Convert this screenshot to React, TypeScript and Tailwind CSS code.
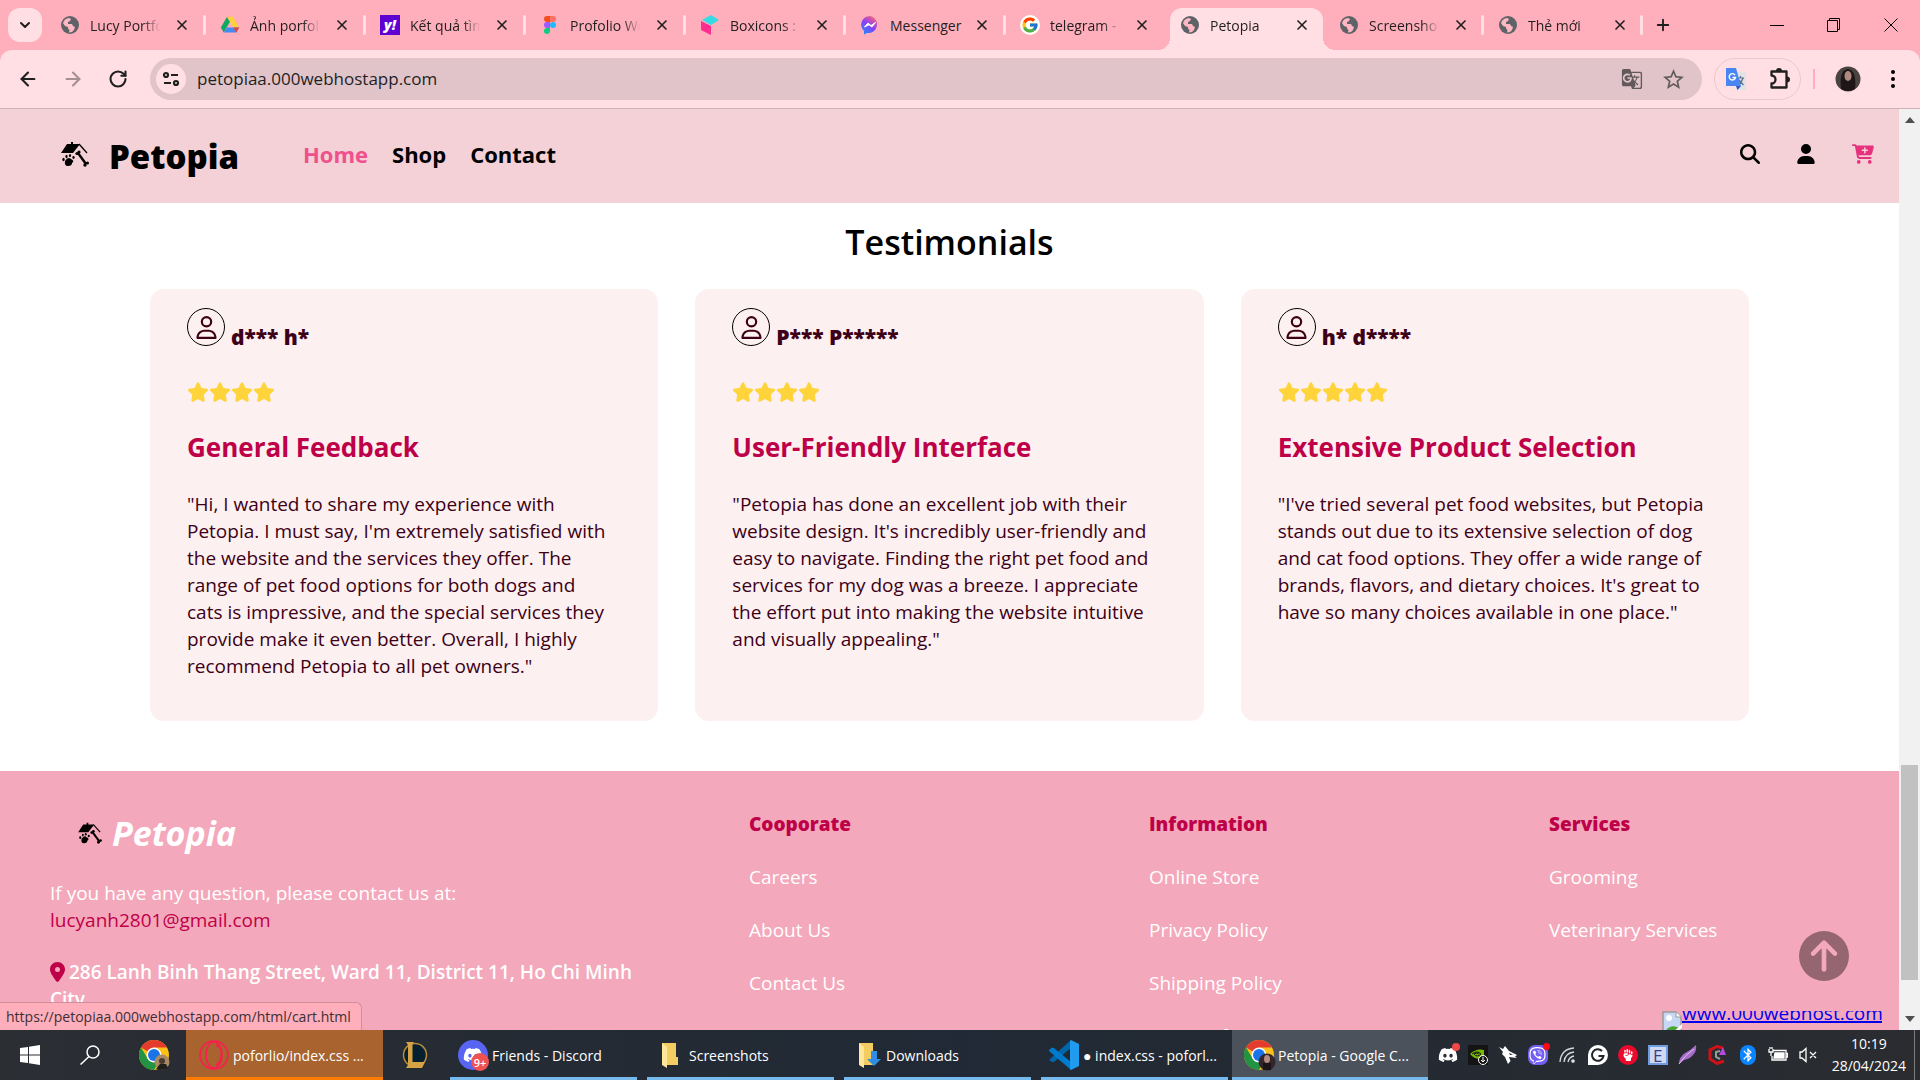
import React from "react";
import {
  FaMagnifyingGlass,
  FaUser,
  FaCartPlus,
  FaRegUser,
  FaStar,
  FaLocationDot,
  FaCircleArrowUp,
  FaDiscord,
  FaViber,
  FaHandFist,
} from "react-icons/fa6";
import { FcGoogle } from "react-icons/fc";
import { MdStarBorder, MdGTranslate, MdBluetooth } from "react-icons/md";
import { ArrowLeft, ArrowRight, ChevronDown, Plus, RotateCw, X } from "lucide-react";

function Globe() {
  return (
    <svg viewBox="0 0 20 20" className="size-5">
      <circle cx="10" cy="10" r="9" fill="#5f6368" />
      <path
        d="M3 8 C4 5 6 3.4 9 3 L11 4 L10 6 L8 7 L8 9 L12 9 L13 11 L15 12 L14 15 L12 17 L9 17.4 L9.500 15 L8 13.500 L8 12 L5 11 Z"
        fill="#ffb8c3"
      />
      <path d="M12 3 L15 4.500 L14 7 L12 7 Z" fill="#5f6368" />
    </svg>
  );
}

function DriveIcon() {
  return (
    <svg viewBox="0 0 24 24" className="size-5">
      <path d="M8.500 2 L1 15 L4.500 21 L12 8 Z" fill="#0da960" />
      <path d="M8.500 2 H15.500 L23 15 H16 Z" fill="#ffcf3d" />
      <path d="M8.300 15 H23 L19.500 21 H4.500 Z" fill="#4688f4" />
      <path d="M16 15 H23 L19.500 21 Z" fill="#ea4335" />
    </svg>
  );
}

function YahooIcon() {
  return (
    <span className="flex size-5 items-center justify-center bg-[#5f01d1] text-[14px] leading-none font-extrabold text-white italic">
      y!
    </span>
  );
}

function FigmaIcon() {
  return (
    <svg viewBox="0 0 20 20" className="size-5">
      <path d="M7 1 H10 V7 H7 A3 3 0 0 1 7 1 Z" fill="#f24e1e" />
      <path d="M10 1 H13 A3 3 0 0 1 13 7 H10 Z" fill="#ff7262" />
      <path d="M7 7 H10 V13 H7 A3 3 0 0 1 7 7 Z" fill="#a259ff" />
      <circle cx="13" cy="10" r="3" fill="#1abcfe" />
      <path d="M7 13 H10 V16 A3 3 0 1 1 7 13 Z" fill="#0acf83" />
    </svg>
  );
}

function BoxIcon() {
  return (
    <svg viewBox="0 0 20 20" className="size-5">
      <path d="M11 0 L19 5 L11 10 L2 5 Z" fill="#35dbe5" />
      <path d="M1 6 L11 11 V20 L1 15 Z" fill="#ff2e8e" />
    </svg>
  );
}

function MessengerIcon() {
  return (
    <svg viewBox="0 0 20 20" className="size-5">
      <defs>
        <linearGradient id="msg" x1="0.200" y1="1" x2="0.800" y2="0">
          <stop offset="0" stopColor="#1f8bff" />
          <stop offset="0.500" stopColor="#8a3ffb" />
          <stop offset="1" stopColor="#ff6470" />
        </linearGradient>
      </defs>
      <path d="M10 1 A9 8.700 0 0 1 10 18 L7 18 L4 19.500 V16 A9 8.700 0 0 1 10 1 Z" fill="url(#msg)" />
      <path d="M4.500 12 L8 8 L11 10.500 L15.500 7.500 L12 12 L9 9.800 Z" fill="#fff" stroke="#fff" />
    </svg>
  );
}

function GoogleIcon() {
  return (
    <span className="flex size-5 items-center justify-center rounded-full bg-white">
      <FcGoogle size={18} />
    </span>
  );
}

function PetLogo({ className }: { className: string }) {
  return (
    <svg viewBox="0 0 28 26" className={className}>
      <path d="M6 3 L10 3 L10 1 H12 V3 H19 L12 12 H0 Z" fill="#000" />
      <path d="M18 3 L26 12" stroke="#000" strokeWidth="1.300" />
      <path d="M4 20 Q7 15 10 18 Q14 20 11 22 Q11 25 7 25 Q3 25 4 20 Z" fill="#000" />
      <ellipse cx="2.500" cy="18.500" rx="1.200" ry="1.700" />
      <ellipse cx="5.500" cy="15.500" rx="1.100" ry="1.700" />
      <ellipse cx="9" cy="14.500" rx="1.100" ry="1.600" />
      <ellipse cx="12.500" cy="16.500" rx="1.200" ry="1.400" />
      <path d="M17 12 L25 23" stroke="#000" strokeWidth="2.400" />
      <circle cx="16" cy="12.500" r="1.600" />
      <circle cx="18" cy="11" r="1.600" />
      <circle cx="24" cy="24" r="1.700" />
      <circle cx="26.500" cy="22" r="1.500" />
    </svg>
  );
}

function ChromeIcon({ face }: { face: "tan" | "dark" }) {
  return (
    <svg viewBox="0 0 32 32" className="size-8 shrink-0">
      <circle cx="15" cy="16" r="15" fill="#fbc116" />
      <path d="M15 16 L2 8.500 A15 15 0 0 1 28 8.500 H15 Z" fill="#e33b2e" />
      <path d="M2 8.500 A15 15 0 0 0 15 31 L21.500 19.500 L9 20 Z" fill="#229342" />
      <circle cx="15" cy="16" r="7.500" fill="#fff" />
      <circle cx="15" cy="16" r="6" fill="#1a73e8" />
      {face === "tan" ? (
        <g>
          <circle cx="23" cy="23" r="7.500" fill="#a98a62" />
          <circle cx="23" cy="22" r="3" fill="#4a3a30" />
          <path d="M17 30 L21 25 H27 L29 29 Q24 32 17 30 Z" fill="#20201f" />
        </g>
      ) : (
        <g>
          <circle cx="23" cy="23" r="8.500" fill="#33262a" />
          <ellipse cx="23" cy="20" rx="3" ry="4" fill="#b58a80" />
          <path d="M19 24 H27 V31 H19 Z" fill="#1c1518" />
        </g>
      )}
    </svg>
  );
}

function TranslateColor() {
  return (
    <svg viewBox="0 0 22 24" className="h-6 w-[22px]">
      <path d="M9 5 H21 V23 H11 Z" fill="#dfe3e8" />
      <path d="M12 11 H19 M15.500 9 V11 M18 11 C17 15 14 17 12.500 18 M14 13 L18.500 18" stroke="#5b6f80" strokeWidth="1.200" fill="none" />
      <path d="M1 1 H11 L16 19 H1 Z" fill="#4a86f3" />
      <path d="M11 19 H16 L12.500 23 Z" fill="#2a56c6" />
      <path d="M10 8 A3.200 3.200 0 1 0 10.500 10.500 H7.500" stroke="#fff" strokeWidth="1.400" fill="none" />
    </svg>
  );
}

function PuzzleIcon() {
  return (
    <svg viewBox="0 0 24 24" className="size-6">
      <path
        d="M3.500 4.500 H18.500 V20.500 H3.500 V16.500 A4 4 0 0 0 3.500 8.500 Z"
        fill="none"
        stroke="#1f1f1f"
        strokeWidth="2.300"
        strokeLinejoin="round"
      />
      <path d="M8 4 A3 3 0 0 1 14 4 Z M19 9.500 A3 3 0 0 1 19 15.500 Z" fill="#1f1f1f" />
    </svg>
  );
}

type Tab = { title: string; icon: React.ReactNode; active?: boolean };

const tabs: Tab[] = [
  { title: "Lucy Portfolio", icon: <Globe /> },
  { title: "Ảnh porfolio", icon: <DriveIcon /> },
  { title: "Kết quả tìm kiếm", icon: <YahooIcon /> },
  { title: "Profolio Website", icon: <FigmaIcon /> },
  { title: "Boxicons : Premium", icon: <BoxIcon /> },
  { title: "Messenger", icon: <MessengerIcon /> },
  { title: "telegram - Tìm", icon: <GoogleIcon /> },
  { title: "Petopia", icon: <Globe />, active: true },
  { title: "Screenshots", icon: <Globe /> },
  { title: "Thẻ mới", icon: <Globe /> },
];

function TabStrip() {
  return (
    <div className="flex h-[50px] items-center bg-[#ffaebb] pl-2 text-[#1f1f1f]">
      <button aria-label="Search tabs" className="mr-1 flex h-[34px] w-[34px] items-center justify-center rounded-xl bg-[#ffdfe4]">
        <ChevronDown size={16} strokeWidth={3} />
      </button>
      {tabs.map((t, i) => (
        <div key={t.title} className={i > 6 ? "relative h-[50px] w-[159px] pt-2" : "relative h-[50px] w-40 pt-2"}>
          {t.active && (
            <>
              <div className="absolute top-2 right-0.5 bottom-0 left-1 rounded-t-xl bg-[#ffdfe4]" />
              <div className="absolute bottom-0 -left-2 size-3 bg-[radial-gradient(circle_at_0_0,transparent_12px,#ffdfe4_12px)]" />
              <div className="absolute -right-2.5 bottom-0 size-3 bg-[radial-gradient(circle_at_100%_0,transparent_12px,#ffdfe4_12px)]" />
            </>
          )}
          <div className="relative flex h-[34px] items-center pl-[14px]">
            {t.icon}
            <span
              className={
                t.title === "Messenger"
                  ? "ml-[10px] w-[74px] overflow-hidden text-[14px] whitespace-nowrap"
                  : "mr-1 ml-[10px] w-[70px] overflow-hidden mask-r-from-75% text-[14px] whitespace-nowrap"
              }
            >
              {t.title}
            </span>
            <button aria-label={"Close " + t.title} className="ml-[10px]">
              <X size={16} strokeWidth={2.5} />
            </button>
          </div>
          {!t.active && i !== 6 && <div className="absolute top-[15px] right-0 h-5 w-[3px] rounded bg-[#ffdfe4]" />}
        </div>
      ))}
      <button aria-label="New tab" className="ml-[11px]">
        <Plus size={18} strokeWidth={2.5} />
      </button>
      <div className="ml-auto flex items-center gap-[43px] pr-[22px] text-black">
        <button aria-label="Minimize">
          <svg className="size-[14px]" viewBox="0 0 14 14"><path d="M0 7.500 H14" stroke="currentColor" /></svg>
        </button>
        <button aria-label="Restore">
          <svg className="size-[14px]" viewBox="0 0 14 14" fill="none" stroke="currentColor">
            <path d="M0.500 2.500 H10.500 V13.500 H0.500 Z M2.500 2.500 V0.500 H12.500 V11.500 H10.500" />
          </svg>
        </button>
        <button aria-label="Close window">
          <svg className="size-[14px]" viewBox="0 0 14 14"><path d="M0.500 0.500 L13.500 13.500 M13.500 0.500 L0.500 13.500" stroke="currentColor" /></svg>
        </button>
      </div>
    </div>
  );
}

function Toolbar() {
  return (
    <div className="bg-[#ffaebb]">
      <div className="flex h-[59px] items-center rounded-t-xl border-b border-[#ccb2b6] bg-[#ffdfe4] pr-[18px] pl-[17px] text-[#1f1f1f]">
        <button aria-label="Back" className="mr-[23px]"><ArrowLeft size={22} strokeWidth={2.3} /></button>
        <button aria-label="Forward" className="mr-6 text-[#a58f93]"><ArrowRight size={22} strokeWidth={2.3} /></button>
        <button aria-label="Reload" className="mr-[22px]"><RotateCw size={20} strokeWidth={2.5} /></button>
        <div className="flex h-[42px] flex-1 items-center rounded-full bg-[#e0c4c9] pr-4 pl-1.5">
          <button aria-label="Site information" className="flex size-[30px] items-center justify-center rounded-full bg-[#ffdfe4]">
            <svg viewBox="0 0 18 16" className="h-4 w-[18px]" fill="none" stroke="#1f1f1f" strokeWidth="2.200">
              <circle cx="4" cy="4" r="2" /><path d="M9 4 H16 M2 12 H9" /><circle cx="14" cy="12" r="2" />
            </svg>
          </button>
          <input aria-label="Address" defaultValue="petopiaa.000webhostapp.com" className="ml-[11px] flex-1 bg-transparent text-[17px] outline-none" />
          <button aria-label="Translate" className="mr-[18px] text-[#62595c]"><MdGTranslate size={22} /></button>
          <button aria-label="Bookmark" className="text-[#62595c]"><MdStarBorder size={25} /></button>
        </div>
        <div className="ml-3 flex h-[42px] w-[87px] items-center justify-between rounded-full border border-[#ecc8cf] pr-2 pl-2.5">
          <button aria-label="Google Translate"><TranslateColor /></button>
          <button aria-label="Extensions"><PuzzleIcon /></button>
        </div>
        <div className="ml-3 h-5 w-0.5 bg-[#ffaebb]" />
        <button aria-label="Profile" className="ml-5">
          <svg viewBox="0 0 26 26" className="size-[26px]">
            <circle cx="13" cy="13" r="12.500" fill="#4b4341" />
            <path d="M6 23 Q4 4 13 3 Q22 4 20 23 Q13 27 6 23 Z" fill="#1e1718" />
            <ellipse cx="13" cy="10" rx="3.500" ry="5" fill="#b08a80" />
          </svg>
        </button>
        <button aria-label="Menu" className="ml-[23px]">
          <svg viewBox="0 0 18 18" className="size-[18px]"><circle cx="9" cy="2" r="2" /><circle cx="9" cy="9" r="2" /><circle cx="9" cy="16" r="2" /></svg>
        </button>
      </div>
    </div>
  );
}

function SiteHeader() {
  return (
    <header className="flex h-[94px] shrink-0 items-center bg-[#f4d0d7] pr-[25px] pb-1 pl-[61px] text-black">
      <a href="#" className="flex items-center">
        <PetLogo className="h-[26px] w-7" />
        <span className="mt-1.5 ml-5 text-[33px] font-extrabold">Petopia</span>
      </a>
      <nav className="ml-16 flex gap-6 text-[22px] font-bold">
        <a href="#" className="text-[#f0508c]">Home</a>
        <a href="#">Shop</a>
        <a href="#">Contact</a>
      </nav>
      <div className="ml-auto flex items-center gap-9">
        <button aria-label="Search"><FaMagnifyingGlass size={20} /></button>
        <button aria-label="Account"><FaUser size={20} /></button>
        <a href="#" aria-label="Cart" className="text-[#e8317c]"><FaCartPlus size={22} /></a>
      </div>
    </header>
  );
}

const reviews = [
  {
    name: "d*** h*",
    stars: 4,
    title: "General Feedback",
    lines: [
      "\"Hi, I wanted to share my experience with",
      "Petopia. I must say, I'm extremely satisfied with",
      "the website and the services they offer. The",
      "range of pet food options for both dogs and",
      "cats is impressive, and the special services they",
      "provide make it even better. Overall, I highly",
      "recommend Petopia to all pet owners.\"",
    ],
  },
  {
    name: "P*** P*****",
    stars: 4,
    title: "User-Friendly Interface",
    lines: [
      "\"Petopia has done an excellent job with their",
      "website design. It's incredibly user-friendly and",
      "easy to navigate. Finding the right pet food and",
      "services for my dog was a breeze. I appreciate",
      "the effort put into making the website intuitive",
      "and visually appealing.\"",
    ],
  },
  {
    name: "h* d****",
    stars: 5,
    title: "Extensive Product Selection",
    lines: [
      "\"I've tried several pet food websites, but Petopia",
      "stands out due to its extensive selection of dog",
      "and cat food options. They offer a wide range of",
      "brands, flavors, and dietary choices. It's great to",
      "have so many choices available in one place.\"",
    ],
  },
];

function Testimonials() {
  return (
    <main className="px-[150px] pt-3">
      <h2 className="text-center text-[34px] leading-[54px] font-semibold text-black">Testimonials</h2>
      <div className="mt-5 grid grid-cols-3 gap-[37px]">
        {reviews.map((r) => (
          <article key={r.title} className="h-[432px] rounded-[14px] bg-[#fcf0f0] px-[37px] pt-[19px] text-[#3d0017]">
            <div className="flex h-[38px] items-start">
              <span className="flex size-[38px] items-center justify-center rounded-full border border-black">
                <FaRegUser size={23} />
              </span>
              <span className="mt-[13px] ml-1.5 text-[21px] leading-8 font-extrabold">{r.name}</span>
            </div>
            <div className="mt-9 flex text-[#ffd43b]" aria-label={r.stars + " stars"}>
              {Array.from({ length: r.stars }, (_, i) => (
                <FaStar key={i} className="h-5 w-[22px]" />
              ))}
            </div>
            <h3 className="mt-[25px] text-[26px] leading-10 font-bold text-[#be0048]">{r.title}</h3>
            <p className="mt-6 text-[19px] leading-[27px] whitespace-nowrap">
              {r.lines.map((l) => (
                <span key={l} className="block">{l}</span>
              ))}
            </p>
          </article>
        ))}
      </div>
    </main>
  );
}

const columns = [
  { title: "Cooporate", links: ["Careers", "About Us", "Contact Us"] },
  { title: "Information", links: ["Online Store", "Privacy Policy", "Shipping Policy", "Terms of Service"] },
  { title: "Services", links: ["Grooming", "Veterinary Services"] },
];

function Footer() {
  return (
    <footer className="mt-[50px] flex flex-1 bg-[#f4a8bb] pt-[38px] pl-[50px] text-[19px] leading-[27px] text-white">
      <div className="w-[699px] shrink-0">
        <a href="#" className="ml-7 flex items-center">
          <PetLogo className="h-[22px] w-6" />
          <span className="ml-2.5 text-[34px] leading-[48px] font-bold italic">Petopia</span>
        </a>
        <p className="mt-[23px]">If you have any question, please contact us at:</p>
        <a href="#" className="font-medium text-[#be0048]">lucyanh2801@gmail.com</a>
        <p className="mt-[25px] font-semibold">
          <FaLocationDot size={20} className="mr-1 inline-block w-[15px] align-[-3px] text-[#be0048]" />
          286 Lanh Binh Thang Street, Ward 11, District 11, Ho Chi Minh<br />City
        </p>
      </div>
      {columns.map((c) => (
        <div key={c.title} className="w-[400px] shrink-0 pt-[2px]">
          <h4 className="font-extrabold text-[#be0048]">{c.title}</h4>
          <ul>
            {c.links.map((l) => (
              <li key={l} className="mt-[26px]"><a href="#">{l}</a></li>
            ))}
          </ul>
        </div>
      ))}
    </footer>
  );
}

function Scrollbar() {
  return (
    <div className="flex w-[21px] shrink-0 flex-col items-center bg-[#f1f1f1]">
      <svg viewBox="0 0 10 6" className="mt-2 h-1.5 w-2.5" fill="#505050"><path d="M0 6 L5 0 L10 6 Z" /></svg>
      <div className="flex-[642]" />
      <div className="w-[17px] flex-[215] bg-[#c1c1c1]" />
      <div className="flex-[36]" />
      <svg viewBox="0 0 10 6" className="mb-2 h-1.5 w-2.5" fill="#505050"><path d="M0 0 L5 6 L10 0 Z" /></svg>
    </div>
  );
}

function BrokenImage() {
  return (
    <svg viewBox="0 0 20 24" className="h-6 w-5 shrink-0">
      <path d="M1 1 H14 L19 6 V23 H1 Z" fill="#c6d8f5" stroke="#9a9a9a" strokeWidth="1.500" />
      <path d="M14 1 V6 H19" fill="#fff" stroke="#9a9a9a" />
      <circle cx="7" cy="7" r="3" fill="#fff" />
      <path d="M2 22 Q8 12 17 17 L19 23 H2 Z" fill="#4ba532" />
      <path d="M8 24 L20 13 V17 L12 24 Z" fill="#fff" />
    </svg>
  );
}

function OperaIcon() {
  return (
    <svg viewBox="0 0 30 30" className="size-[30px]" fill="none" stroke="#fa1e4e" strokeWidth="1.600">
      <circle cx="15" cy="15" r="14" />
      <ellipse cx="15" cy="15" rx="8" ry="13" />
      <path d="M17 5 Q24 8 22 17 Q21 23 17 25" />
    </svg>
  );
}

function DiscordApp() {
  return (
    <span className="relative flex size-[30px] shrink-0 items-center justify-center rounded-full bg-[#5865f2] text-white">
      <FaDiscord size={20} />
      <span className="absolute -right-px -bottom-px flex size-[18px] items-center justify-center rounded-full bg-[#ee5253] text-[11px] leading-none font-semibold">9+</span>
    </span>
  );
}

function Folder({ download }: { download?: boolean }) {
  return (
    <svg viewBox="0 0 26 28" className="ml-1 h-7 w-[26px] shrink-0">
      <path d="M3 2 H17 V16 H19 V24 H3 Z" fill="#f3cd62" />
      <path d="M3 2 L8 6 V27 L3 24 Z" fill="#ffe69b" />
      {download && <path d="M15 10 H21 V18 H25 L18 25 L11 18 H15 Z" fill="#2f8de4" />}
    </svg>
  );
}

function VSCodeIcon() {
  return (
    <svg viewBox="0 0 30 30" className="size-[30px] shrink-0">
      <path d="M22 0 L2 18 L0 20 L3 22 L5 22 L22 8 Z" fill="#0065a9" />
      <path d="M22 30 L0 11 L0 10 L3 7.500 L5 8 L22 22 Z" fill="#007acc" />
      <path d="M22 0 L30 4 V26 L22 30 L21 29 V1 Z" fill="#1f9cf0" />
    </svg>
  );
}

const apps = [
  { label: "Friends - Discord", icon: <DiscordApp /> },
  { label: "Screenshots", icon: <Folder /> },
  { label: "Downloads", icon: <Folder download /> },
  { label: "● index.css - poforl...", icon: <VSCodeIcon /> },
];

function TrayIcons() {
  return (
    <div className="flex items-center gap-[10px] text-white">
      <span className="relative"><FaDiscord size={20} /><span className="absolute -top-0.5 -right-0.5 size-2 rounded-full bg-[#f04747]" /></span>
      <svg viewBox="0 0 20 20" className="size-5">
        <path d="M0 0 H20 V20 H0 Z" fill="#141414" />
        <path d="M2 9 Q8 3 16 5 V13 Q8 16 2 9 Z" fill="#76b900" />
        <path d="M4 9 Q9 5 13 9 Q9 13 6 9 Q9 7 11 9" fill="none" stroke="#141414" />
        <circle cx="15" cy="15" r="4.500" fill="#141414" stroke="#fff" />
        <path d="M15 12 V16 M13 15 L15 17 L17 15" stroke="#fff" fill="none" />
      </svg>
      <svg viewBox="0 0 20 20" className="size-5" fill="#fff">
        <path d="M1 2 L5 4 L7 1 L11 6 L19 10 L17 11.500 L19 13 L11 12 L12.500 16 L10 19 L7 12 L4 9 L5 7 Z" />
        <path d="M11 8 L15 9.500 L12 10 Z" fill="#222831" />
      </svg>
      <span className="relative flex size-5 items-center justify-center rounded-[7px] bg-[#7360f2]">
        <FaViber size={17} />
        <span className="absolute -top-0.5 -right-0.5 size-[7px] rounded-full bg-[#ff0a14]" />
      </span>
      <svg viewBox="0 0 20 20" className="size-5" fill="none" stroke="#d5d8db" strokeWidth="1.300">
        <path d="M2 17 Q3 4 16 3 M6 17 Q7 8 16 7 M10 17 Q11 12 16 11" />
        <circle cx="15" cy="16" r="1.200" fill="#fff" />
      </svg>
      <svg viewBox="0 0 20 20" className="size-5">
        <path d="M10 0 A10 10 0 0 1 10 20 H0 V10 A10 10 0 0 1 10 0 Z" fill="#fff" />
        <path d="M14 6 A5.800 5.800 0 1 0 15.500 11 H10.500" fill="none" stroke="#20262c" strokeWidth="2" />
      </svg>
      <span className="flex size-5 items-center justify-center rounded-full bg-[#ea0a2c]"><FaHandFist size={12} /></span>
      <span className="flex size-5 items-center justify-center border-2 border-[#6f9be0] bg-[#cfd9f3] text-[17px] leading-none font-medium text-[#3a3f86]">E</span>
      <svg viewBox="0 0 20 20" className="size-5">
        <path d="M1 19 Q1 12 7 8 Q13 5 18 0 Q19 6 15 10 Q12 14 6 15 Z" fill="#a76cc9" />
        <path d="M1 19 Q7 10 16 4" stroke="#e0c4ee" fill="none" />
      </svg>
      <svg viewBox="0 0 20 20" className="size-5" fill="none">
        <path d="M15 3 L9 1.500 L2 5 V14 L9 18.500 L16 16" stroke="#d01218" strokeWidth="3" />
        <path d="M12 6 L8 7 V12 L12 14" stroke="#9a9a9a" strokeWidth="2" />
        <path d="M11 10 L15 2 L18 10 Z" fill="#b44be0" />
      </svg>
      <span className="mx-[2px] flex h-5 w-4 items-center justify-center rounded-full bg-[#0a84ff]"><MdBluetooth size={16} /></span>
      <svg viewBox="0 0 20 20" className="size-5" fill="none" stroke="#fff" strokeWidth="1.300">
        <path d="M5 5.500 H18 V15 H4 V11 M18 8.500 H19.500 V12 H18" />
        <path d="M7 8 H16 V13 H6 Z" fill="#fff" />
        <path d="M1 4 V7 H5 V4 M2 4 V2 M4 4 V2 M3 7 V11" />
      </svg>
      <svg viewBox="0 0 20 20" className="size-5" fill="none" stroke="#fff" strokeWidth="1.300">
        <path d="M2 7 H4 L8 3.500 V16.500 L4 13 H2 Z M12 7 L18 13 M18 7 L12 13" />
      </svg>
    </div>
  );
}

function Taskbar() {
  return (
    <div className="flex h-[50px] shrink-0 items-center bg-linear-to-r from-[#2b2e33] via-[#202935] to-[#2a2c30] text-[14px] text-white">
      <button aria-label="Start" className="ml-5">
        <svg viewBox="0 0 20 20" className="size-5" fill="#fff"><path d="M0 3 L8 2 V9.500 H0 Z M9 1.800 L20 0 V9.500 H9 Z M0 10.500 H8 V18 L0 17 Z M9 10.500 H20 V20 L9 18.200 Z" /></svg>
      </button>
      <button aria-label="Search" className="ml-10">
        <svg viewBox="0 0 20 20" className="size-5" fill="none" stroke="#fff" strokeWidth="1.500"><circle cx="13" cy="7" r="6" /><path d="M9 11.500 L0.500 19.500" /></svg>
      </button>
      <button aria-label="Google Chrome" className="ml-[39px]"><ChromeIcon face="tan" /></button>
      <button className="ml-[15px] flex h-full w-[197px] items-center gap-1 border-b-[3px] border-[#ff7a00] bg-[#a8632f] pt-[3px] pl-[13px] whitespace-nowrap">
        <OperaIcon />poforlio/index.css ...
      </button>
      <button aria-label="League of Legends" className="ml-[17px]">
        <svg viewBox="0 0 28 28" className="size-7">
          <circle cx="15" cy="14" r="11.500" fill="#07202f" stroke="#b58c3c" strokeWidth="1.500" />
          <path d="M6 1 H14 L12.500 3 V21 H25 L22 27 H6 L8 24 V4 Z" fill="#d6a445" />
        </svg>
      </button>
      <div className="ml-[22px] flex h-full gap-[10px]">
        {apps.map((a) => (
          <button key={a.label} className="flex h-full w-[187px] items-center gap-1 border-b-[3px] border-[#76b9ed] pt-[3px] pl-2 whitespace-nowrap">
            {a.icon}{a.label}
          </button>
        ))}
      </div>
      <button className="ml-1 flex h-full w-[196px] items-center gap-0.5 border-b-[3px] border-[#76b9ed] bg-[#4b525b] pt-[3px] pl-3 whitespace-nowrap">
        <ChromeIcon face="dark" />Petopia - Google C...
      </button>
      <div className="ml-auto flex h-full items-center">
        <TrayIcons />
        <div className="ml-[14px] text-center leading-[22px]">
          <div>10:19</div>
          <div>28/04/2024</div>
        </div>
        <div className="mr-[5px] ml-2 h-full w-px bg-[#7a7d80]" />
      </div>
    </div>
  );
}

export default function App() {
  return (
    <div className="flex h-screen flex-col overflow-hidden font-['Open_Sans','Noto_Sans',sans-serif]">
      <TabStrip />
      <Toolbar />
      <div className="relative flex min-h-0 flex-1">
        <div className="flex min-w-0 flex-1 flex-col overflow-hidden bg-white">
          <SiteHeader />
          <Testimonials />
          <Footer />
        </div>
        <Scrollbar />
        <button aria-label="Back to top" className="absolute right-[71px] bottom-[49px] text-[#956571]">
          <FaCircleArrowUp size={50} />
        </button>
        <div className="absolute right-[38px] bottom-0 flex h-[19px] w-[220px] items-start overflow-hidden">
          <BrokenImage />
          <a href="#" className="-mt-[11px] text-[19px] leading-[27px] text-[#0000ee] underline decoration-2">www.000webhost.com</a>
        </div>
        <div className="absolute bottom-0 left-0 h-7 rounded-tr-md border-t border-r border-[#cf8f9b] bg-[#ffaebb] pr-2.5 pl-1.5 text-[14px] leading-[27px] text-[#3c3034]">
          https://petopiaa.000webhostapp.com/html/cart.html
        </div>
      </div>
      <Taskbar />
    </div>
  );
}
